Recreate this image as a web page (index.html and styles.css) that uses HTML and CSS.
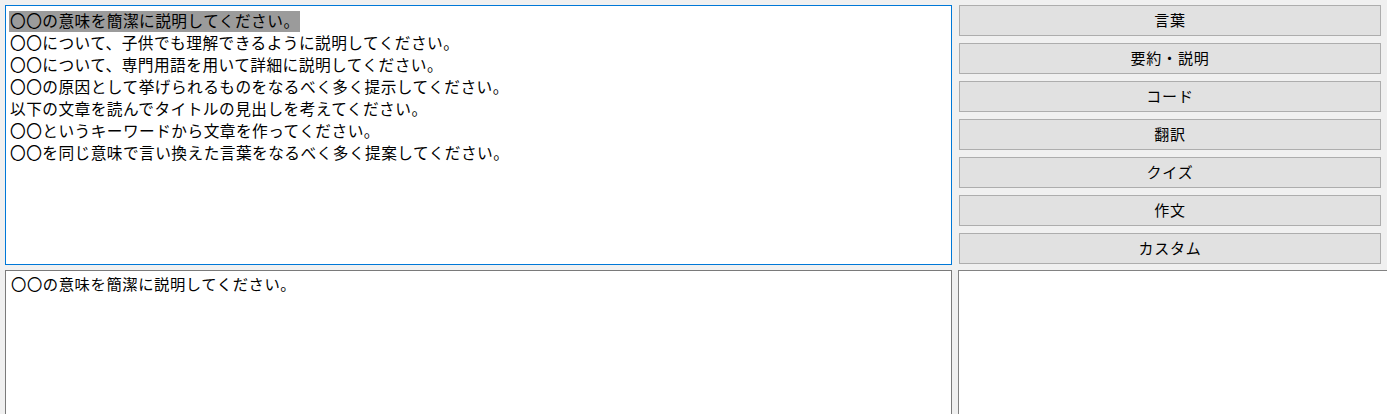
FILE: index.html
```html
<!DOCTYPE html>
<html lang="ja">
<head>
<meta charset="utf-8">
<title>Prompt</title>
<link rel="stylesheet" href="styles.css">
</head>
<body>
<div class="app">
  <div class="row top">
    <div class="box list-box">
      <div class="line"><span class="sel">〇〇の意味を簡潔に説明してください。</span></div>
      <div class="line">〇〇について、子供でも理解できるように説明してください。</div>
      <div class="line">〇〇について、専門用語を用いて詳細に説明してください。</div>
      <div class="line">〇〇の原因として挙げられるものをなるべく多く提示してください。</div>
      <div class="line">以下の文章を読んでタイトルの見出しを考えてください。</div>
      <div class="line">〇〇というキーワードから文章を作ってください。</div>
      <div class="line">〇〇を同じ意味で言い換えた言葉をなるべく多く提案してください。</div>
    </div>
    <div class="buttons">
      <button class="btn">言葉</button>
      <button class="btn">要約・説明</button>
      <button class="btn">コード</button>
      <button class="btn">翻訳</button>
      <button class="btn">クイズ</button>
      <button class="btn">作文</button>
      <button class="btn">カスタム</button>
    </div>
  </div>
  <div class="row bottom">
    <div class="box edit-box">
      <div class="line">〇〇の意味を簡潔に説明してください。</div>
    </div>
    <div class="box side-box"></div>
  </div>
</div>
</body>
</html>
```
FILE: styles.css
```css
html, body {
  margin: 0;
  padding: 0;
  background: #f0f0f0;
  overflow: hidden;
}
body {
  font-family: "Noto Sans CJK JP", "Noto Sans", sans-serif;
  color: #000;
}
.app {
  width: 1387px;
  height: 414px;
  padding: 5px 0 0 5px;
  box-sizing: border-box;
  display: flex;
  flex-direction: column;
  gap: 5px;
  overflow: hidden;
}
.row {
  display: flex;
}
.top {
  height: 260px;
  gap: 7px;
  flex-shrink: 0;
}
.bottom {
  flex: 1;
  gap: 6px;
}
.box {
  background: #fff;
  box-sizing: border-box;
  flex-shrink: 0;
}
.list-box {
  width: 947px;
  height: 260px;
  border: 1px solid #0078d7;
  padding: 4px 4px 0 4px;
  font-size: 15.7px;
  letter-spacing: 0.45px;
  line-height: 22px;
}
.line {
  white-space: nowrap;
  height: 22px;
  line-height: 22px;
}
.sel {
  display: inline-block;
  background: #9b9b9b;
  line-height: 20px;
  height: 21px;
  padding: 0 0 0 1px;
  margin-left: -1px;
}
.buttons {
  width: 422px;
  display: flex;
  flex-direction: column;
  gap: 7px;
  flex-shrink: 0;
}
.btn {
  height: 31px;
  margin: 0;
  padding: 0 0 1px 0;
  background: #e1e1e1;
  border: 1px solid #adadad;
  font-family: "Noto Sans CJK JP", "Noto Sans", sans-serif;
  font-size: 15px;
  letter-spacing: 0.8px;
  color: #000;
  line-height: 28px;
}
.edit-box {
  width: 947px;
  border: 1px solid #7a7a7a;
  border-bottom: none;
  padding: 2px 4px 0 5px;
  font-size: 15.3px;
  letter-spacing: 0.6px;
}
.edit-box .line {
  line-height: 20px;
  height: 20px;
}
.side-box {
  width: 440px;
  border: 1px solid #828282;
  border-right: none;
  border-bottom: none;
}
```
